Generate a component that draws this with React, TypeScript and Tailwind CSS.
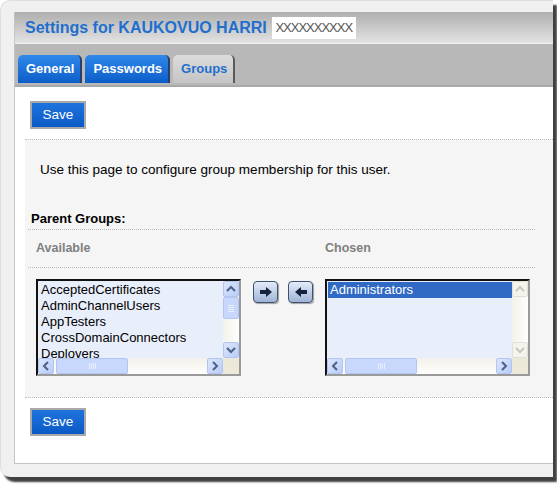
import type { ReactNode } from "react";

const font = "font-['Liberation_Sans',Arial,sans-serif]";

function Chevron({ dir, disabled = false }: { dir: "up" | "down" | "left" | "right"; disabled?: boolean }) {
  const d = {
    up: "M3 9 L7 5 L11 9",
    down: "M3 5 L7 9 L11 5",
    left: "M9 3 L5 7 L9 11",
    right: "M5 3 L9 7 L5 11",
  }[dir];
  return (
    <svg width="14" height="14" viewBox="0 0 14 14">
      <path d={d} fill="none" stroke={disabled ? "#c9c7ba" : "#4d6185"} strokeWidth="2" />
    </svg>
  );
}

function ScrollButton({ dir, disabled = false }: { dir: "up" | "down" | "left" | "right"; disabled?: boolean }) {
  return (
    <div
      className={
        disabled
          ? "flex h-[16px] w-[16px] items-center justify-center rounded-[2px] border border-[#e2e0d6] bg-[#f4f3ee]"
          : "flex h-[16px] w-[16px] items-center justify-center rounded-[2px] border border-[#b3c6f1] bg-gradient-to-br from-[#dce6fd] to-[#b9cdf8]"
      }
    >
      <Chevron dir={dir} disabled={disabled} />
    </div>
  );
}

function ListBox({ items, selected, disabledV = false, thumbV = true }: { items: string[]; selected?: string; disabledV?: boolean; thumbV?: boolean }) {
  return (
    <div className="grid h-[97px] w-[205px] grid-cols-[1fr_16px] grid-rows-[1fr_16px] border-2 border-t-[#111] border-l-[#111] border-r-[#9a9a9a] border-b-[#9a9a9a] bg-[#e8eefa]">
      <div className="overflow-hidden pt-[1px] pl-[1px]">
        {items.map((item) => (
          <div
            key={item}
            className={
              item === selected
                ? "h-[16px] bg-[#316ac5] pl-[2px] text-[13px] leading-[16px] text-white"
                : "h-[16px] pl-[2px] text-[13px] leading-[16px] text-black"
            }
          >
            {item}
          </div>
        ))}
      </div>
      <div className="flex flex-col bg-gradient-to-r from-[#f3f1ea] to-[#fefefe]">
        <ScrollButton dir="up" disabled={disabledV} />
        {thumbV ? (
          <div className="flex h-[22px] w-[16px] flex-col items-center justify-center gap-[1px] rounded-[2px] border border-[#b3c6f1] bg-[#c8d7fc]">
            <div className="h-px w-[6px] bg-[#e9efff]" />
            <div className="h-px w-[6px] bg-[#e9efff]" />
            <div className="h-px w-[6px] bg-[#e9efff]" />
            <div className="h-px w-[6px] bg-[#e9efff]" />
          </div>
        ) : null}
        <div className="flex-1" />
        <ScrollButton dir="down" disabled={disabledV} />
      </div>
      <div className="flex bg-gradient-to-b from-[#f3f1ea] to-[#fefefe]">
        <ScrollButton dir="left" />
        <div className="ml-[2px] flex h-[16px] w-[72px] items-center justify-center gap-[1px] rounded-[2px] border border-[#b3c6f1] bg-[#c8d7fc]">
          <div className="h-[6px] w-px bg-[#e9efff]" />
          <div className="h-[6px] w-px bg-[#e9efff]" />
          <div className="h-[6px] w-px bg-[#e9efff]" />
          <div className="h-[6px] w-px bg-[#e9efff]" />
        </div>
        <div className="flex-1" />
        <ScrollButton dir="right" />
      </div>
      <div className="bg-[#ece9d8]" />
    </div>
  );
}

function ArrowButton({ dir }: { dir: "left" | "right" }) {
  return (
    <button
      type="button"
      className="flex h-[22px] w-[25px] items-center justify-center rounded-[4px] border border-[#3f5170] bg-gradient-to-b from-[#e4ecf8] to-[#9fb4d4] shadow-[1px_1px_1px_rgba(0,0,0,0.35)]"
    >
      <svg width="14" height="12" viewBox="0 0 14 12">
        {dir === "right" ? (
          <path d="M1 4 H7 V1 L13 6 L7 11 V8 H1 Z" fill="#16233f" />
        ) : (
          <path d="M13 4 H7 V1 L1 6 L7 11 V8 H13 Z" fill="#16233f" />
        )}
      </svg>
    </button>
  );
}

function SaveButton() {
  return (
    <button
      type="button"
      className="h-[28px] w-[56px] border-2 border-[#a9a9a9] bg-gradient-to-b from-[#1f73dc] to-[#0a5ac6] text-[13.5px] text-white"
    >
      Save
    </button>
  );
}

function Tab({ children, active = false }: { children: ReactNode; active?: boolean }) {
  return (
    <div
      className={
        active
          ? "flex h-[28px] items-center rounded-t-[5px] border-r-2 border-[#5a5a5a] bg-gradient-to-b from-[#dcdcdc] to-[#c4c4c4] pr-[6px] pl-[8px] text-[13px] font-bold text-[#1f6fce]"
          : "flex h-[28px] items-center rounded-t-[5px] border-r-2 border-[#2c3e66] bg-gradient-to-b from-[#2f88ea] to-[#0b5ec9] pr-[6px] pl-[8px] text-[13px] font-bold text-white"
      }
    >
      {children}
    </div>
  );
}

export default function App() {
  const available = ["AcceptedCertificates", "AdminChannelUsers", "AppTesters", "CrossDomainConnectors", "Deployers"];

  return (
    <div className={`h-[484px] w-[557px] bg-white ${font}`}>
      <div className="flex h-[477px] w-[553px] flex-col rounded-l-[10px] border-l border-t border-[#dedede] bg-[#f0f0f0] pt-[11px] pb-[13px] pl-[13px] shadow-[4px_5px_2px_rgba(0,0,0,0.75)]">
        <div className="flex flex-1 flex-col border-l border-b border-[#c4c4c4] bg-white">
          <div className="flex h-[31px] shrink-0 items-center gap-[5px] bg-gradient-to-b from-[#afafaf] to-[#e3e3e3] pl-[10px]">
            <h1 className="text-[16px] font-bold text-[#1f6fce]">Settings for KAUKOVUO HARRI</h1>
            <span className="flex h-[22px] w-[84px] items-center justify-center bg-white text-[13px] tracking-[-1px] text-[#555]">
              XXXXXXXXXX
            </span>
          </div>
          <div className="h-px shrink-0 bg-[#f2f2f2]" />
          <div className="flex h-[43px] shrink-0 items-end gap-[3px] border-b-2 border-[#a8a8a8] bg-[#b8b8b8] pb-[2px] pl-[3px]">
            <Tab>General</Tab>
            <Tab>Passwords</Tab>
            <Tab active>Groups</Tab>
          </div>

          <div className="px-[15px] pt-[14px]">
            <SaveButton />
          </div>

          <div className="mt-[10px] ml-[10px] flex flex-col border-y border-dotted border-[#bdbdbd] bg-[#f5f5f5] pb-[21px]">
            <p className="pt-[22px] pl-[15px] text-[13.5px] leading-[16px] text-black">
              Use this page to configure group membership for this user.
            </p>
            <div className="mt-[33px] mr-[18px] ml-[3px]">
              <div className="border-b border-dotted border-[#bdbdbd] pb-[2px] pl-[3px] text-[13px] leading-[16px] font-bold text-black">
                Parent Groups:
              </div>
              <div className="grid grid-cols-[205px_84px_205px] border-b border-dotted border-[#bdbdbd] pt-[10px] pb-[11px] pl-[8px] text-[12.5px] leading-[16px] font-bold text-[#808080]">
                <span>Available</span>
                <span />
                <span>Chosen</span>
              </div>
              <div className="grid grid-cols-[205px_84px_205px] pt-[11px] pl-[8px]">
                <ListBox items={available} />
                <div className="flex gap-[10px] pt-[2px] pl-[12px]">
                  <ArrowButton dir="right" />
                  <ArrowButton dir="left" />
                </div>
                <ListBox items={["Administrators"]} selected="Administrators" disabledV thumbV={false} />
              </div>
            </div>
          </div>

          <div className="px-[15px] pt-[10px]">
            <SaveButton />
          </div>
        </div>
      </div>
    </div>
  );
}
